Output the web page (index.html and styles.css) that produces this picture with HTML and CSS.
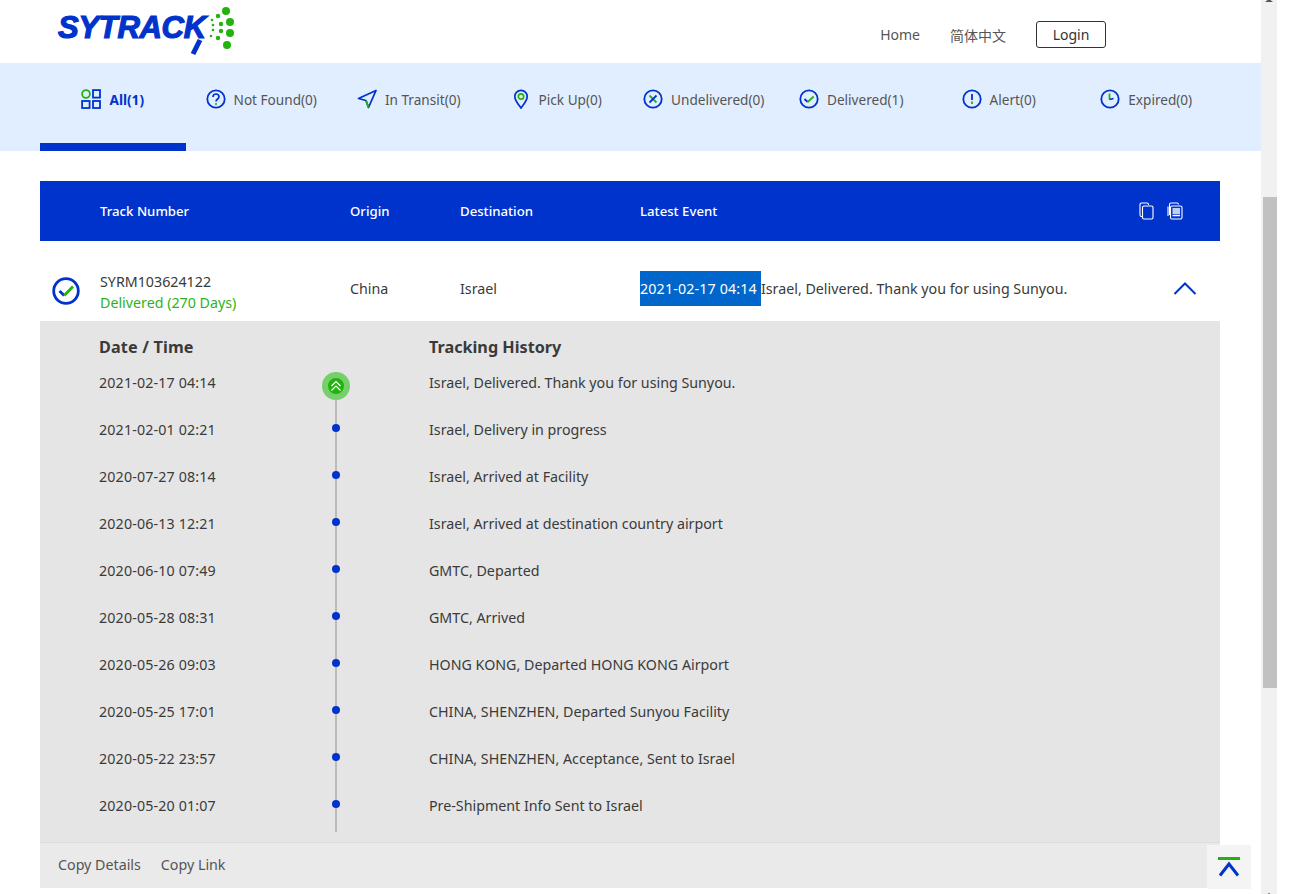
FILE: index.html
```html
<!DOCTYPE html>
<html lang="en">
<head>
    <meta charset="UTF-8">
    <meta name="viewport" content="width=device-width, initial-scale=1.0">
    <title>SYTRACK Tracking</title>
    <link rel="stylesheet" href="styles.css">
</head>
<body>
    <div class="page">
        <div class="main">
            <header class="top-bar">
                <a class="logo">
                    <span class="logo-text">SYTRACK</span>
                    <svg class="logo-mark" viewBox="0 0 50 60" fill="none">
                        <path d="M11 40L4 54" stroke="#0033cc" stroke-width="5"/>
                        <g fill="#22b30e">
                            <circle cx="37" cy="11" r="4"/>
                            <circle cx="41" cy="22" r="4"/>
                            <circle cx="41" cy="33" r="4"/>
                            <circle cx="38" cy="45" r="4"/>
                            <circle cx="29" cy="16" r="2.200"/>
                            <circle cx="32" cy="24" r="2.200"/>
                            <circle cx="32" cy="31" r="2.200"/>
                            <circle cx="29" cy="38" r="2.200"/>
                            <circle cx="23" cy="20" r="1.300"/>
                            <circle cx="24" cy="25" r="1.300"/>
                            <circle cx="24" cy="30" r="1.300"/>
                            <circle cx="22" cy="36" r="1.300"/>
                        </g>
                    </svg>
                </a>
                <nav class="top-nav">
                    <a class="nav-link">Home</a>
                    <a class="nav-link">简体中文</a>
                    <button class="login-button">Login</button>
                </nav>
            </header>

            <div class="tabs">
                <a class="tab tab-active">
                    <svg class="tab-icon" viewBox="0 0 20 20" fill="none" stroke-width="1.800">
                        <circle cx="5" cy="5" r="3.900" stroke="#22b30e"/>
                        <rect x="12" y="1.100" width="7" height="7.500" stroke="#0033cc"/>
                        <rect x="1.100" y="12" width="7.500" height="7" stroke="#0033cc"/>
                        <rect x="12" y="12" width="7" height="7" stroke="#0033cc"/>
                    </svg>
                    All(1)
                </a>
                <a class="tab">
                    <svg class="tab-icon" viewBox="0 0 20 20" fill="none">
                        <circle cx="10" cy="10" r="8.700" stroke="#0033cc" stroke-width="1.800"/>
                        <path d="M7 8c0-4 6-4 6 0 0 2-3 2-3 4.500" stroke="#0033cc" stroke-width="1.700"/>
                        <circle cx="10" cy="15" r="1.100" fill="#22b30e"/>
                    </svg>
                    Not Found(0)
                </a>
                <a class="tab">
                    <svg class="tab-icon" viewBox="0 0 20 20" fill="none">
                        <path d="M19 1.500L1.500 9.500l7.500 2 2.500 7z" stroke="#0033cc" stroke-width="1.800" stroke-linejoin="round"/>
                        <path d="M9 11.500l2.500 7" stroke="#22b30e" stroke-width="1.800"/>
                    </svg>
                    In Transit(0)
                </a>
                <a class="tab">
                    <svg class="tab-icon" viewBox="0 0 20 20" fill="none">
                        <path d="M10 19C7 15 3.800 11.500 3.800 7.500a6.200 6.200 0 0 1 12.400 0C16.200 11.500 13 15 10 19z" stroke="#0033cc" stroke-width="1.700"/>
                        <circle cx="10" cy="7.500" r="2.700" stroke="#22b30e" stroke-width="1.700"/>
                    </svg>
                    Pick Up(0)
                </a>
                <a class="tab">
                    <svg class="tab-icon" viewBox="0 0 20 20" fill="none">
                        <circle cx="10" cy="10" r="8.700" stroke="#0033cc" stroke-width="1.800"/>
                        <path d="M6.500 6.500l7 7" stroke="#22b30e" stroke-width="1.800"/>
                        <path d="M13.500 6.500l-7 7" stroke="#0033cc" stroke-width="1.800"/>
                    </svg>
                    Undelivered(0)
                </a>
                <a class="tab">
                    <svg class="tab-icon" viewBox="0 0 20 20" fill="none">
                        <circle cx="10" cy="10" r="8.700" stroke="#0033cc" stroke-width="1.800"/>
                        <path d="M5.500 10l3.200 3" stroke="#0033cc" stroke-width="1.800"/>
                        <path d="M8.700 13l6-5.500" stroke="#22b30e" stroke-width="1.800"/>
                    </svg>
                    Delivered(1)
                </a>
                <a class="tab">
                    <svg class="tab-icon" viewBox="0 0 20 20" fill="none">
                        <circle cx="10" cy="10" r="8.700" stroke="#0033cc" stroke-width="1.800"/>
                        <path d="M10 5v6" stroke="#0033cc" stroke-width="1.800"/>
                        <path d="M10 12.500v2.500" stroke="#22b30e" stroke-width="1.800"/>
                    </svg>
                    Alert(0)
                </a>
                <a class="tab">
                    <svg class="tab-icon" viewBox="0 0 20 20" fill="none">
                        <circle cx="10" cy="10" r="8.700" stroke="#0033cc" stroke-width="1.800"/>
                        <path d="M9.500 4.500v6" stroke="#22b30e" stroke-width="1.800"/>
                        <path d="M9.500 10.500l4-1" stroke="#0033cc" stroke-width="1.800"/>
                    </svg>
                    Expired(0)
                </a>
            </div>

            <section class="results">
                <div class="columns table-head">
                    <span></span>
                    <span>Track Number</span>
                    <span>Origin</span>
                    <span>Destination</span>
                    <span>Latest Event</span>
                    <span class="head-tools">
                        <svg class="tool-icon" viewBox="0 0 16 18" fill="none" stroke="#fff" stroke-width="1.100">
                            <path d="M3 14.500H2.500A1.500 1.500 0 0 1 1 13V2.500A1.500 1.500 0 0 1 2.500 1H8a1.500 1.500 0 0 1 1.500 1.500V3"/>
                            <rect x="3.500" y="4" width="10.500" height="13" rx="1.500"/>
                        </svg>
                        <svg class="tool-icon" viewBox="0 0 16 18" fill="none" stroke="#fff" stroke-width="1.100">
                            <path d="M2.500 13V2.500A1.500 1.500 0 0 1 4 1h6a1.500 1.500 0 0 1 1.500 1.500"/>
                            <path d="M1 14V4.500"/>
                            <rect x="3.500" y="4" width="11.500" height="13" rx="1.500"/>
                            <path d="M5.500 7h7.500M5.500 9h7.500M5.500 11h7.500M5.500 13.500h7.500" stroke-width="1.300"/>
                        </svg>
                    </span>
                </div>

                <div class="columns track-row">
                    <svg class="status-icon" viewBox="0 0 28 28" fill="none">
                        <circle cx="14" cy="14" r="12.300" stroke="#0033cc" stroke-width="2.800"/>
                        <path d="M7.500 14l4.700 4.500" stroke="#0033cc" stroke-width="2.800"/>
                        <path d="M12.200 18.500L21 9.500" stroke="#22b30e" stroke-width="2.800"/>
                    </svg>
                    <div class="track-number">
                        <div>SYRM103624122</div>
                        <div class="track-status">Delivered (270 Days)</div>
                    </div>
                    <span>China</span>
                    <span>Israel</span>
                    <span class="latest-event"><span class="selected-text">2021-02-17 04:14</span>Israel, Delivered. Thank you for using Sunyou.</span>
                    <span class="row-toggle">
                        <svg class="toggle-icon" viewBox="0 0 24 14" fill="none" stroke="#0033cc" stroke-width="2">
                            <path d="M1.500 13L12 2.500 22.500 13"/>
                        </svg>
                    </span>
                </div>

                <div class="details">
                    <div class="history-row history-head">
                        <span>Date / Time</span>
                        <span></span>
                        <span>Tracking History</span>
                    </div>
                    <div class="history-row">
                        <span>2021-02-17 04:14</span>
                        <span class="mark mark-first">
                            <span class="mark-badge">
                                <svg class="badge-icon" viewBox="0 0 12 12" fill="none" stroke="#fff" stroke-width="1.200">
                                    <path d="M1.500 6L6 1.500 10.500 6M1.500 10.500L6 6l4.500 4.500"/>
                                </svg>
                            </span>
                        </span>
                        <span>Israel, Delivered. Thank you for using Sunyou.</span>
                    </div>
                    <div class="history-row">
                        <span>2021-02-01 02:21</span>
                        <span class="mark"><span class="mark-dot"></span></span>
                        <span>Israel, Delivery in progress</span>
                    </div>
                    <div class="history-row">
                        <span>2020-07-27 08:14</span>
                        <span class="mark"><span class="mark-dot"></span></span>
                        <span>Israel, Arrived at Facility</span>
                    </div>
                    <div class="history-row">
                        <span>2020-06-13 12:21</span>
                        <span class="mark"><span class="mark-dot"></span></span>
                        <span>Israel, Arrived at destination country airport</span>
                    </div>
                    <div class="history-row">
                        <span>2020-06-10 07:49</span>
                        <span class="mark"><span class="mark-dot"></span></span>
                        <span>GMTC, Departed</span>
                    </div>
                    <div class="history-row">
                        <span>2020-05-28 08:31</span>
                        <span class="mark"><span class="mark-dot"></span></span>
                        <span>GMTC, Arrived</span>
                    </div>
                    <div class="history-row">
                        <span>2020-05-26 09:03</span>
                        <span class="mark"><span class="mark-dot"></span></span>
                        <span>HONG KONG, Departed HONG KONG Airport</span>
                    </div>
                    <div class="history-row">
                        <span>2020-05-25 17:01</span>
                        <span class="mark"><span class="mark-dot"></span></span>
                        <span>CHINA, SHENZHEN, Departed Sunyou Facility</span>
                    </div>
                    <div class="history-row">
                        <span>2020-05-22 23:57</span>
                        <span class="mark"><span class="mark-dot"></span></span>
                        <span>CHINA, SHENZHEN, Acceptance, Sent to Israel</span>
                    </div>
                    <div class="history-row">
                        <span>2020-05-20 01:07</span>
                        <span class="mark mark-last"><span class="mark-dot"></span></span>
                        <span>Pre-Shipment Info Sent to Israel</span>
                    </div>
                </div>

                <div class="details-footer">
                    <a>Copy Details</a>
                    <a>Copy Link</a>
                </div>
            </section>

            <button class="back-top">
                <svg class="back-top-icon" viewBox="0 0 22 20" fill="none">
                    <path d="M0 1.500h22" stroke="#22b30e" stroke-width="3"/>
                    <path d="M2 18.500L11 7l9 11.500" stroke="#0033cc" stroke-width="3"/>
                </svg>
            </button>
        </div>

        <div class="scrollbar">
            <span class="scroll-arrow scroll-arrow-up"></span>
            <span class="scroll-thumb"></span>
            <span class="scroll-arrow scroll-arrow-down"></span>
        </div>
    </div>
</body>
</html>
```

FILE: styles.css
```css
* {
    margin: 0;
    padding: 0;
    box-sizing: border-box;
}

body {
    font-family: 'Noto Sans', 'Noto Sans CJK SC', sans-serif;
    font-size: 14.25px;
    color: #3a3a3a;
    background: #fff;
    overflow: hidden;
}

.page {
    display: flex;
    height: 894px;
    width: 1277px;
}

.main {
    position: relative;
    width: 1261px;
    height: 894px;
    overflow: hidden;
}

/* Top bar */
.top-bar {
    display: flex;
    justify-content: space-between;
    align-items: center;
    height: 63px;
    padding: 0 155px 0 58px;
}

.logo {
    display: flex;
    align-items: flex-start;
    height: 63px;
}

.logo-text {
    font-family: 'Liberation Sans', sans-serif;
    font-size: 31px;
    font-weight: 700;
    font-style: italic;
    line-height: 56px;
    letter-spacing: -0.3px;
    color: #0033cc;
    -webkit-text-stroke: 1.2px #0033cc;
}

.logo-mark {
    width: 50px;
    height: 60px;
    margin-left: -17px;
}

.top-nav {
    display: flex;
    align-items: center;
    gap: 30px;
    padding-top: 6px;
    font-size: 14px;
    color: #555;
}

.login-button {
    width: 70px;
    height: 27px;
    border: 1px solid #333;
    border-radius: 3px;
    background: #fff;
    color: #333;
    font: inherit;
}

/* Status tabs */
.tabs {
    display: grid;
    grid-template-columns: repeat(8, 1fr);
    height: 88px;
    margin-bottom: 30px;
    padding: 0 41px 0 40px;
    background: #e1eeff;
}

.tab {
    display: flex;
    justify-content: center;
    align-items: flex-start;
    gap: 8px;
    padding-top: 26px;
    line-height: 21px;
    font-size: 13.6px;
    color: #555;
}

.tab-active {
    margin-right: 2px;
    border-bottom: 8px solid #0033cc;
    color: #0033cc;
    font-weight: 700;
}

.tab-icon {
    width: 20px;
    height: 20px;
}

/* Tracking table */
.results {
    margin: 0 41px 0 40px;
}

.columns {
    display: grid;
    grid-template-columns: 60px 250px 110px 180px 1fr 90px;
    align-items: center;
}

.table-head {
    height: 60px;
    background: #0033cc;
    color: #fff;
    font-size: 13.2px;
    font-weight: 500;
}

.head-tools {
    display: flex;
    gap: 12px;
    padding-left: 9px;
}

.tool-icon {
    width: 16px;
    height: 18px;
}

.track-row {
    height: 80px;
    padding-top: 14px;
}

.status-icon {
    width: 28px;
    height: 28px;
    margin: 6px 0 0 12px;
}

.track-number {
    margin-top: 8px;
    line-height: 21px;
}

.track-status {
    color: #2db31a;
}

.selected-text {
    display: inline-block;
    line-height: 35px;
    padding-right: 4px;
    letter-spacing: 0.15px;
    background: #0066cc;
    color: #fff;
}

.row-toggle {
    display: flex;
    padding-left: 43px;
}

.toggle-icon {
    width: 24px;
    height: 14px;
}

/* History */
.details {
    padding: 0 0 13px 59px;
    background: #e5e5e5;
}

.history-row {
    display: grid;
    grid-template-columns: 223px 28px 1fr;
    height: 47px;
    line-height: 47px;
}

.history-row > :first-child {
    letter-spacing: 0.15px;
}

.history-row > :last-child {
    padding-left: 79px;
}

.history-head {
    height: 38px;
    padding-top: 14px;
    line-height: 24px;
    font-size: 16.2px;
    font-weight: 700;
}

.mark {
    position: relative;
    display: flex;
    justify-content: center;
    align-items: center;
}

.mark::before {
    content: '';
    position: absolute;
    top: 0;
    bottom: 0;
    left: 13px;
    width: 2px;
    background: #bbb;
}

.mark-first::before {
    top: 24px;
}

.mark-last::before {
    bottom: -3px;
}

.mark-dot {
    position: relative;
    width: 8px;
    height: 8px;
    margin-top: -3px;
    border-radius: 50%;
    background: #0033cc;
}

.mark-badge {
    position: relative;
    display: flex;
    justify-content: center;
    align-items: center;
    width: 28px;
    height: 28px;
    margin-top: 7px;
    border: 6px solid #76cf6a;
    border-radius: 50%;
    background: #22b30e;
}

.badge-icon {
    width: 12px;
    height: 12px;
}

.details-footer {
    display: flex;
    gap: 20px;
    height: 46px;
    padding-left: 18px;
    border-top: 1px solid #ddd;
    border-bottom: 1px solid #e3ecf7;
    line-height: 44px;
    background: #eaeaea;
    color: #555;
}

.back-top {
    position: absolute;
    top: 845px;
    left: 1207px;
    display: flex;
    justify-content: center;
    align-items: center;
    width: 44px;
    height: 44px;
    border: none;
    background: #f4f4f4;
}

.back-top-icon {
    width: 22px;
    height: 20px;
}

/* Scrollbar */
.scrollbar {
    display: flex;
    flex-direction: column;
    align-items: center;
    width: 16px;
    height: 894px;
    overflow: hidden;
    background: #f1f1f1;
}

.scroll-arrow {
    flex: none;
    width: 0;
    height: 0;
    border-left: 4px solid transparent;
    border-right: 4px solid transparent;
}

.scroll-arrow-up {
    margin-top: -1px;
    border-bottom: 3px solid #555;
}

.scroll-arrow-down {
    margin-top: 205px;
    border-bottom: 3px solid #555;
}

.scroll-thumb {
    flex: none;
    width: 14px;
    height: 491px;
    margin: 195px 0 0 1px;
    background: #c1c1c1;
}
```
